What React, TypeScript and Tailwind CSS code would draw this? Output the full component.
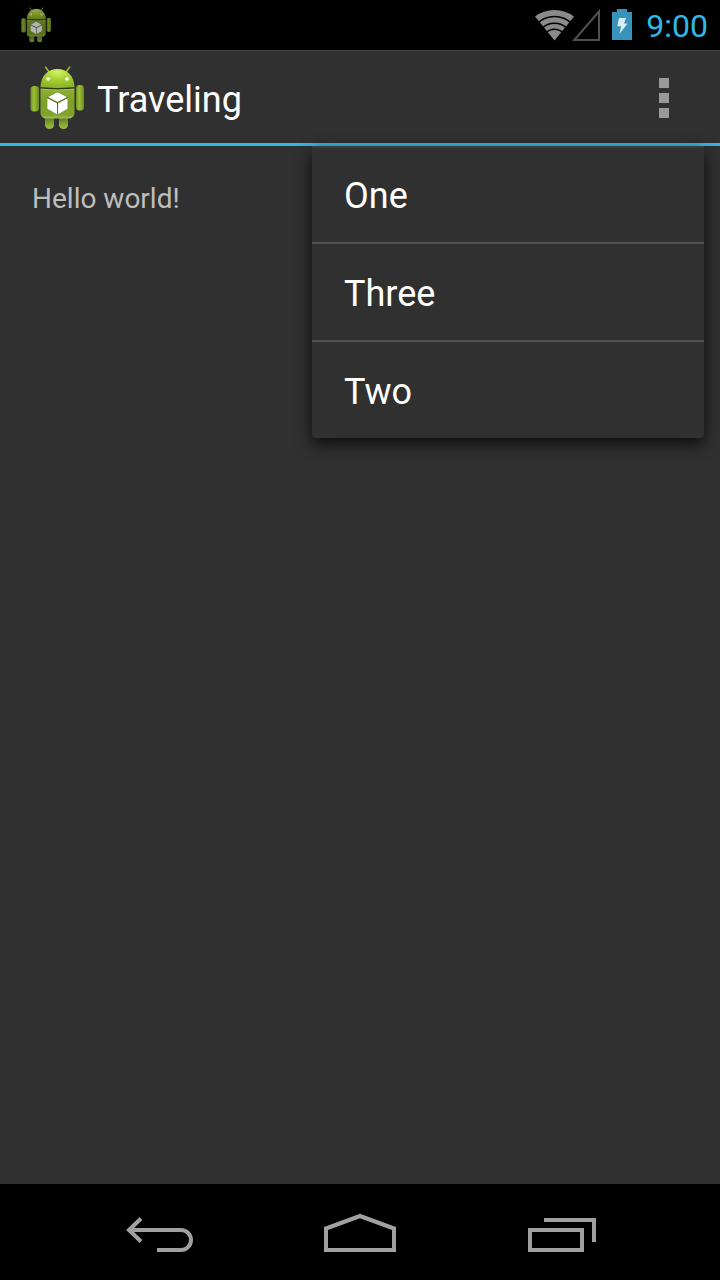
import React, { useId, useState } from "react";

function Robot({ className }: { className: string }) {
  const id = useId();
  const head = `${id}-head`;
  const body = `${id}-body`;
  const limb = `${id}-limb`;
  const leg = `${id}-leg`;
  return (
    <svg viewBox="5 8 64 68" className={className} aria-hidden="true">
      <defs>
        <radialGradient id={head} cx="0.5" cy="0.15" r="0.8">
          <stop offset="0" stopColor="#d0f26a" />
          <stop offset="0.5" stopColor="#a9d232" />
          <stop offset="1" stopColor="#8bb32a" />
        </radialGradient>
        <linearGradient id={body} x1="0" y1="0" x2="0" y2="1">
          <stop offset="0" stopColor="#8fae33" />
          <stop offset="0.5" stopColor="#7c9f28" />
          <stop offset="0.88" stopColor="#7fa42a" />
          <stop offset="1" stopColor="#a3bd62" />
        </linearGradient>
        <linearGradient id={limb} x1="0" y1="0" x2="1" y2="0">
          <stop offset="0" stopColor="#6f9023" />
          <stop offset="0.4" stopColor="#9dc136" />
          <stop offset="1" stopColor="#6a8a20" />
        </linearGradient>
        <linearGradient id={leg} x1="0" y1="0" x2="0" y2="1">
          <stop offset="0" stopColor="#4f6b18" />
          <stop offset="0.6" stopColor="#83a82c" />
          <stop offset="1" stopColor="#9dbb48" />
        </linearGradient>
      </defs>
      <path d="M25.6 11.2l4 5.4M49.6 11.2l-4 5.4" stroke="#9cc534" strokeWidth="1.5" strokeLinecap="round" />
      <path d="M25 60h9v9.2a4.5 3.8 0 0 1-9 0zM39 60h9v9.2a4.5 3.8 0 0 1-9 0z" fill={`url(#${leg})`} />
      <rect x="10.5" y="30" width="8.5" height="25.5" rx="3.5" fill={`url(#${limb})`} />
      <rect x="56" y="29" width="8" height="25.5" rx="3.5" fill={`url(#${limb})`} />
      <path d="M20.5 31.5C20.5 20 28 13 37.5 13s17 7 17 18.500q-17 1.500-34 0z" fill={`url(#${head})`} />
      <path d="M20.500 32.500q17 1.800 34 0V57c0 3.500-2.500 5.600-6 5.600H26.500c-3.500 0-6-2.100-6-5.600z" fill={`url(#${body})`} />
      <path d="M20.500 31.700q17 1.800 34 0" fill="none" stroke="#2c3b0c" strokeWidth="0.900" />
      <path d="M21 33.200q16.500 1.700 33 0" fill="none" stroke="#b4d24f" strokeWidth="0.700" />
      <circle cx="28.200" cy="23" r="1.800" fill="#fff" />
      <circle cx="47" cy="23" r="1.800" fill="#fff" />
      <path d="M37.500 36L48 41.200V52.500L37.700 58.500L27 52.500V41.200z" fill="#4b611a" opacity="0.700" />
      <path d="M37.500 36.300L47 41l-9.400 5L28 41zM27.300 42.300l9.700 5v10.900l-9.700-5.500zM47.600 42.300l-9.500 5v10.900l9.500-5.500z" fill="#fff" />
    </svg>
  );
}

function Wifi() {
  return (
    <svg viewBox="0 0 40 34" className="h-[34px] w-10" aria-hidden="true">
      <path d="M19.500 32.500L0 8.500Q8.500 2 19.500 2T39 8.500z" fill="#8a8a8a" />
      <g fill="none" stroke="#000" strokeWidth="1.600">
        <circle cx="19.500" cy="33" r="24.500" />
        <circle cx="19.500" cy="33" r="17.800" />
        <circle cx="19.500" cy="33" r="11.700" />
      </g>
    </svg>
  );
}

function Signal() {
  return (
    <svg viewBox="0 0 28 34" className="-ml-[3px] h-[34px] w-7" aria-hidden="true">
      <path d="M2.300 32L27 3.500V32z" fill="none" stroke="#505050" strokeWidth="2" />
    </svg>
  );
}

function Battery() {
  return (
    <svg viewBox="0 0 20 34" className="ml-3 h-[34px] w-5" aria-hidden="true">
      <path d="M0 4h5V1h10v3h5v28H0z" fill="#3793ba" />
      <path d="M7 10h7l-2 5.500h3.500L7.500 26l1.700-7.800H5.300z" fill="#dcecf3" />
    </svg>
  );
}

const items = ["One", "Three", "Two"];

export default function App() {
  const [open, setOpen] = useState(true);
  return (
    <div className="flex min-h-screen flex-col bg-[#303030] font-[Roboto,sans-serif] text-white">
      <div className="flex h-[50px] items-center bg-black pr-3 pl-[18px]">
        <Robot className="h-[38px] w-9 opacity-70" />
        <div className="ml-auto flex items-center">
          <Wifi />
          <Signal />
          <Battery />
          <time className="ml-3.5 pt-0.5 text-[32px] leading-[38px] text-[#33b5e5]">9:00</time>
        </div>
      </div>

      <header className="relative flex h-24 items-center bg-[#303030] pr-8 pl-[25px] shadow-[inset_0_-3px_0_#33b5e5,inset_0_1px_0_#454545]">
        <Robot className="h-[68px] w-16" />
        <h1 className="ml-2 pt-1 text-4xl">Traveling</h1>
        <button
          type="button"
          aria-label="More options"
          aria-expanded={open}
          onClick={() => setOpen(!open)}
          className="ml-auto flex h-20 w-12 flex-col items-center justify-center gap-[5px]"
        >
          <span className="size-2.5 bg-[#999]" />
          <span className="size-2.5 bg-[#999]" />
          <span className="size-2.5 bg-[#999]" />
        </button>
        {open && (
          <ul className="absolute top-full right-4 w-[392px] divide-y-2 divide-[#505050] rounded-b bg-[#303030] shadow-[inset_0_2px_0_#3c3c3c,0_6px_16px_rgba(0,0,0,0.75)]">
            {items.map((item) => (
              <li key={item}>
                <button type="button" className="block h-24 w-full px-8 pt-1 text-left text-4xl">
                  {item}
                </button>
              </li>
            ))}
          </ul>
        )}
      </header>

      <main className="flex-1 p-8">
        <p className="text-[28px] leading-[42px] text-[#bebebe]">Hello world!</p>
      </main>

      <nav className="flex h-24 items-center justify-center gap-[100px] bg-black pt-1.5">
        <button type="button" aria-label="Back">
          <svg viewBox="0 0 100 70" className="h-[70px] w-[100px]" fill="none" stroke="#a0a0a0" strokeWidth="4" aria-hidden="true">
            <path d="M19 30h52a10 10 0 0 1 0 20H47M31 18.500L19 30l12 11.500" />
          </svg>
        </button>
        <button type="button" aria-label="Home">
          <svg viewBox="0 0 100 70" className="h-[70px] w-[100px]" fill="none" stroke="#a0a0a0" strokeWidth="4" aria-hidden="true">
            <path d="M16 50V28.500L50 16l34 12.500V50z" />
          </svg>
        </button>
        <button type="button" aria-label="Recent apps">
          <svg viewBox="0 0 100 70" className="h-[70px] w-[100px]" fill="none" stroke="#a0a0a0" strokeWidth="4" aria-hidden="true">
            <path d="M20 30h52v20H20zM34 20h50v22" />
          </svg>
        </button>
      </nav>
    </div>
  );
}
